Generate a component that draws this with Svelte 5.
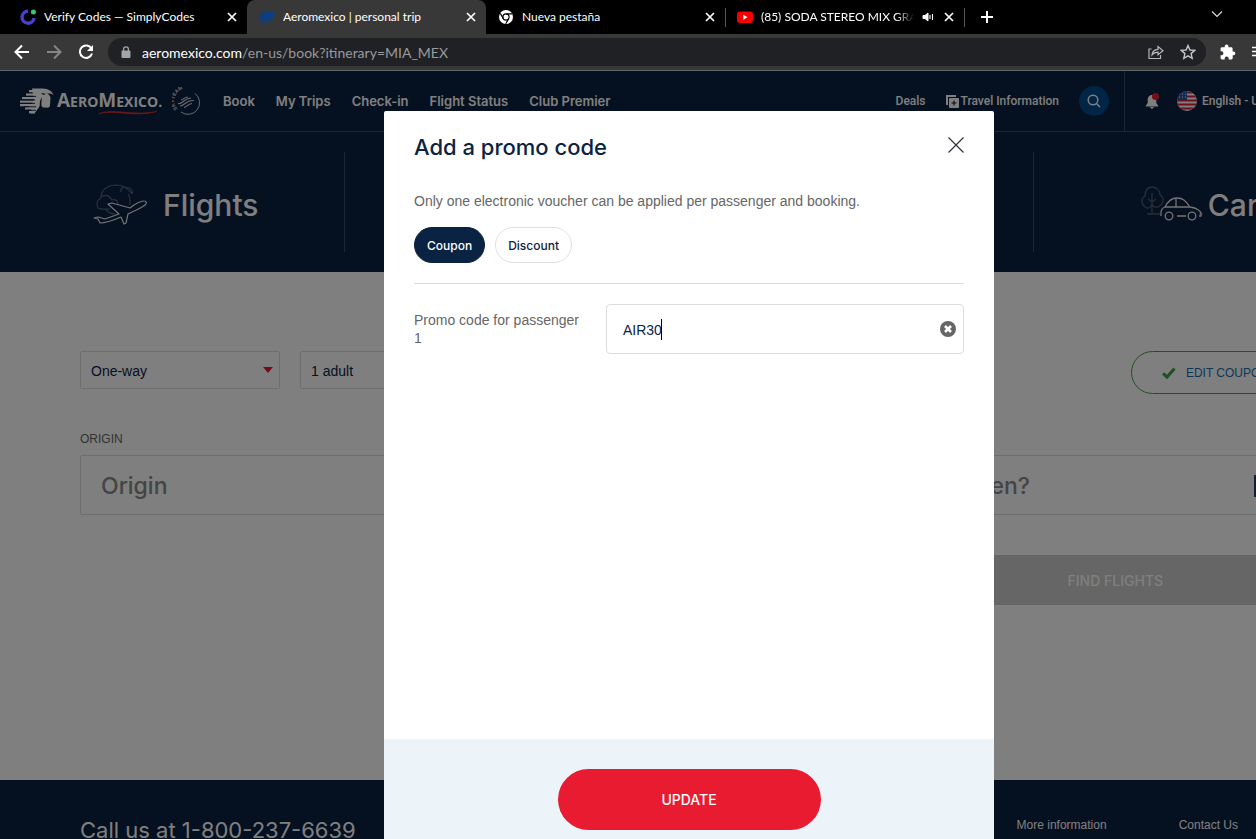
<script lang="ts">
  let promoCode = $state('AIR30');
  let voucherType = $state('Coupon');
  let dialogOpen = $state(true);

  const voucherTypes = ['Coupon', 'Discount'];
  const mainLinks = ['Book', 'My Trips', 'Check-in', 'Flight Status', 'Club Premier'];
</script>

{#snippet closeIcon()}
  <svg width="10" height="10" viewBox="0 0 10 10" fill="none" stroke="#fff" stroke-width="1.7">
    <path d="M1 1l8 8M9 1L1 9" />
  </svg>
{/snippet}

<div class="browser">
  <div class="tabs">
    <div class="tab">
      <svg class="favicon" viewBox="0 0 16 16">
        <path d="M8 2.2A6 6 0 1 0 14 9" fill="none" stroke="#4a3fd0" stroke-width="3.4" />
        <circle cx="13.4" cy="3" r="2.5" fill="#3fc46b" />
      </svg>
      <span class="tab-title">Verify Codes — SimplyCodes</span>
      <button class="tab-close" aria-label="Close tab">{@render closeIcon()}</button>
    </div>
    <div class="tab active">
      <svg class="favicon" viewBox="0 0 16 16" fill="#0d3f80">
        <path d="M1 7c1-3 4-5 8-5 4 0 6 1 7 4l-2 0c1 2 0 5-3 5l-2 2-4 1-2-2-3-1 1-1-2-1 1-1z" />
        <path d="M2 6.5h5M1 9h6" stroke="#25384f" stroke-width=".7" />
      </svg>
      <span class="tab-title">Aeromexico | personal trip</span>
      <button class="tab-close" aria-label="Close tab">{@render closeIcon()}</button>
    </div>
    <div class="tab">
      <svg class="favicon" viewBox="0 0 16 16">
        <circle cx="8" cy="8" r="7" fill="#fff" />
        <circle cx="8" cy="8" r="3.1" fill="#fff" stroke="#000" stroke-width="1.2" />
        <path d="M8 4.9h6.2M5.3 9.6L2.3 4.4M10.7 9.6l-3 5.2" stroke="#000" stroke-width="1.2" />
      </svg>
      <span class="tab-title">Nueva pestaña</span>
      <button class="tab-close" aria-label="Close tab">{@render closeIcon()}</button>
    </div>
    <div class="tab divided">
      <svg class="favicon" viewBox="0 0 16 16">
        <rect y="2.5" width="16" height="11.5" rx="3" fill="#f60000" />
        <path d="M6.3 5.7v5l4.3-2.5z" fill="#fff" />
      </svg>
      <span class="tab-title fade">(85) SODA STEREO MIX GRANDES EXITOS</span>
      <svg width="12" height="12" viewBox="0 0 12 12" fill="none" stroke="#fff">
        <path d="M1 4.5h2l3-2.5v8l-3-2.5H1z" fill="#fff" />
        <path d="M8 4v4M10.5 3v6" stroke-width="1.1" />
      </svg>
      <button class="tab-close" aria-label="Close tab">{@render closeIcon()}</button>
    </div>
    <button class="new-tab" aria-label="New tab">
      <svg width="12" height="12" viewBox="0 0 12 12" stroke="#fff" stroke-width="2"><path d="M6 0v12M0 6h12" /></svg>
    </button>
    <button class="tab-search" aria-label="Search tabs">
      <svg width="12" height="8" viewBox="0 0 12 8" fill="none" stroke="#ddd" stroke-width="1.2"><path d="M1 1.5l5 5 5-5" /></svg>
    </button>
  </div>

  <div class="toolbar">
    <button class="tool" aria-label="Back">
      <svg width="16" height="16" viewBox="0 0 16 16" fill="none" stroke="#fff" stroke-width="2"><path d="M15 8H2M8 1.5L1.5 8 8 14.5" /></svg>
    </button>
    <button class="tool" aria-label="Forward">
      <svg width="16" height="16" viewBox="0 0 16 16" fill="none" stroke="#868686" stroke-width="2"><path d="M1 8h13M8 1.5L14.5 8 8 14.5" /></svg>
    </button>
    <button class="tool" aria-label="Reload">
      <svg width="16" height="16" viewBox="0 0 16 16" fill="none" stroke="#fff" stroke-width="2"><path d="M13.4 4.5A6.2 6.2 0 1 0 14 9.5" /><path d="M15 1v6H9z" fill="#fff" stroke="none" /></svg>
    </button>
    <div class="omnibox">
      <svg width="10" height="12" viewBox="0 0 10 12"><rect x=".5" y="4.5" width="9" height="7.5" rx="1" fill="#a2a4a8" /><path d="M2.6 5V3.3a2.4 2.4 0 0 1 4.8 0V5" fill="none" stroke="#a2a4a8" stroke-width="1.3" /></svg>
      <span class="url"><b>aeromexico.com</b>/en-us/book?itinerary=MIA_MEX</span>
      <svg width="16" height="16" viewBox="0 0 16 16" fill="none" stroke="#b6b6b8" stroke-width="1.2"><path d="M3.5 5H1v9.500h11.500V11M4 11c.3-3.600 2.400-5.400 6-5.600V2.500L15 6.700l-5 4.100V8.200C7.500 8.200 5.500 9 4 11z" /></svg>
      <svg width="16" height="16" viewBox="0 0 16 16" fill="none" stroke="#c4c4c6" stroke-width="1.4"><path d="M8 1.500l1.900 4.500 4.900.4-3.700 3.200 1.100 4.700L8 11.800l-4.200 2.500 1.100-4.700L1.200 6.400l4.900-.4z" /></svg>
    </div>
    <button class="tool" aria-label="Extensions">
      <svg width="16" height="16" viewBox="0 0 16 16" fill="#fff"><path d="M13.5 7.500h-.9V4.600c0-.8-.6-1.400-1.400-1.400H8.500v-.8a1.900 1.900 0 0 0-3.800 0v.8H2c-.8 0-1.400.6-1.400 1.400v2.700h.8a2 2 0 0 1 0 4H.6V14c0 .8.6 1.400 1.400 1.400h2.700v-.8a2 2 0 0 1 4 0v.8h2.600c.8 0 1.400-.6 1.400-1.400v-2.800h.8a1.850 1.850 0 0 0 0-3.700z" /></svg>
    </button>
    <button class="tool last" aria-label="Playlist">
      <svg width="16" height="16" viewBox="0 0 16 16" stroke="#fff" stroke-width="1.6"><path d="M0 3.500h11M0 7.500h11M0 11.500h7" /></svg>
    </button>
  </div>

  <div class="viewport">
    <div class="site">
      <header class="site-header">
        <a class="logo" href="#home" aria-label="Aeromexico">
          <svg width="34" height="28" viewBox="0 0 34 28" fill="#fff">
            <path d="M12 1.500h11c5 .2 8.500 2 10.500 6.500-2-1.300-4-1.600-6.500-1.500 2 1 3 2 3.500 4l-.5 8c-.5 2-2 2.500-3.500 2H23c-1.500-.5-2-3-1.500-6l.5-4.500-2 4c-.5 3 .5 5-1.500 7l-4 5.500h-4l1-5H8l6-8z" />
            <path d="M9 3h12v2.300H9zM6 6.500h12v2.300H6zM2 10h14v2.300H2zM0 13.500h16v2.300H0zM0 17h16v2.200H0zM5 20.300h12v2.200H5zM9 24h6v2.200H9z" />
            <path d="M3 9.400h13M1 12.900h14M0 16.400h15M4 19.800h12M7 23.300h9" stroke="#0a2040" stroke-width=".9" />
            <path d="M21 6l5 .8-2.500 1.200z" fill="#0a2040" />
          </svg>
          <span class="wordmark">
            <span><span class="cap">A</span>ERO<span class="cap">M</span>EXICO.</span>
            <svg class="swoosh" width="60" height="5" viewBox="0 0 60 5"><path d="M1 3.500C18-2 34 6 59 1.500 37 7.500 20 0 1 3.500z" fill="#e0352b" stroke="#e0352b" stroke-width=".5" /></svg>
          </span>
          <svg class="skyteam" width="28" height="28" viewBox="0 0 28 28" fill="none" stroke="#d6d9de">
            <defs><path id="skyteam-arc" d="M5.500 22A11 11 0 0 1 23 5.500" /></defs>
            <text font-size="5" font-weight="700" fill="#d6d9de" stroke="none"><textPath href="#skyteam-arc">SKYTEAM</textPath></text>
            <path d="M23 6.500A11.500 11.500 0 0 1 9 25" />
            <path d="M6 16.500c5 1 5-5 13-5.500M8 19c5 0 5-6 14-5.500M12 20.500c3 0 3-3.500 8-4M9 13c3-.5 3-3 7-3" stroke-width="1.1" />
          </svg>
        </a>
        <nav class="main-nav">
          {#each mainLinks as link}
            <a href="#book">{link}</a>
          {/each}
        </nav>
        <nav class="side-nav">
          <a href="#deals">Deals</a>
          <a class="travel" href="#travel">
            <svg width="13" height="13" viewBox="0 0 13 13"><path d="M1 10V1h9" fill="none" stroke="#fff" stroke-width="2" /><rect x="3" y="3" width="10" height="10" rx="1" fill="#fff" /><path d="M8 5.500v5M5.500 8h5" stroke="#0a2040" stroke-width="1.200" /></svg>
            Travel Information
          </a>
          <button class="search" aria-label="Search">
            <svg width="14" height="14" viewBox="0 0 14 14" fill="none" stroke="#fff" stroke-width="1.5"><circle cx="6" cy="6" r="4.8" /><path d="M9.500 9.500l3.500 3.500" /></svg>
          </button>
        </nav>
        <div class="account">
          <button class="bell" aria-label="Notifications">
            <svg width="16" height="18" viewBox="0 0 16 18"><path d="M7 3C4 3 2.700 5.500 2.700 8v3L1 13.500V14.500h12V13.500L11.300 11V8C11.300 5.500 10 3 7 3z" fill="#fff" /><path d="M5.200 15h3.600a1.800 1.800 0 0 1-3.600 0z" fill="#fff" /><circle cx="10.500" cy="4.500" r="3.500" fill="#f5182f" /></svg>
          </button>
          <a class="language" href="#language">
            <svg width="20" height="20" viewBox="0 0 20 20">
              <clipPath id="flag"><circle cx="10" cy="10" r="10" /></clipPath>
              <g clip-path="url(#flag)"><path fill="#fff" d="M0 0h20v20H0z" /><path d="M0 1.500h20M0 5.500h20M0 9.500h20M0 13.500h20M0 17.500h20" stroke="#d8203a" stroke-width="2" /><path fill="#2358a5" d="M0 0h10v9H0z" /><path d="M2 3h8M2 6h8" stroke="#fff" stroke-dasharray="1 2" /></g>
            </svg>
            English - US
          </a>
        </div>
      </header>

      <nav class="products">
        <a href="#flights">
          <svg width="54" height="42" viewBox="0 0 54 42" fill="none" stroke="#e8eaee" stroke-width="1.2" stroke-linejoin="round">
            <path d="M5 24c-2-4-1-8 3-10 0-8 6-12 14-13 8 0 14 4 17 9M8 13c6-4 9 0 11 3 3-1 6 0 6 4M5 24c3 2 7 1 12 1M28 8c-1-4 3-6 6-4 4-1 6 3 5 6M35 10c3 4 2 8 2 11M13 26c3 3 5 4 9 4" stroke="#566477" />
            <path d="M1 34l4-1 7 2 14-5-11-10 4-1 18 5c5-4 10-7 14-7 3 0 3 2 1 4-5 4-11 6-17 9l-2 9-2 1-3-7c-7 3-14 6-21 6l-2-4z" />
          </svg>
          Flights
        </a>
        <span></span>
        <span></span>
        <a href="#cars" class="cars">
          <svg width="62" height="38" viewBox="0 0 62 38" fill="none" stroke="#e8eaee" stroke-width="1.3" stroke-linejoin="round">
            <path d="M4 21c-4-3-4-9 0-11C4 4 7 1 11 1s8 3 8 8c4 2 4 7 1 10-4 4-8 2-9-1-1 4-4 5-7 3zM11 7v21M7 13l4 3 4-3M6 28h13M58 28h4" stroke="#4d5a6c" />
            <path d="M20 30v-3c0-3 1-5 4-6 3-6 6-9 12-9s9 3 13 9c7 1 11 4 11 7v2h-2M24 21h25M35 12v9M36 30h9" />
            <circle cx="28" cy="30" r="3.8" /><circle cx="51" cy="30" r="3.8" />
          </svg>
          Cars
        </a>
      </nav>

      <main class="booking">
        <div class="options">
          <div class="select">
            <select aria-label="Trip type"><option>One-way</option><option>Round trip</option></select>
            <svg width="10" height="6" viewBox="0 0 10 6"><path d="M0 0h10L5 6z" fill="#e81b30" /></svg>
          </div>
          <div class="select">
            <select aria-label="Passengers"><option>1 adult</option><option>2 adults</option></select>
            <svg width="10" height="6" viewBox="0 0 10 6"><path d="M0 0h10L5 6z" fill="#e81b30" /></svg>
          </div>
          <button class="edit-coupon">
            <svg width="14" height="12" viewBox="0 0 14 12" fill="none" stroke="#43a047" stroke-width="3.2"><path d="M1 6.300l4 3.700 7.500-8.500" /></svg>
            EDIT COUPON
          </button>
        </div>
        <div class="fields">
          <div class="field">
            <label for="origin">ORIGIN</label>
            <input id="origin" placeholder="Origin" />
          </div>
          <div class="field when">
            <label for="dates" aria-label="Dates"></label>
            <input id="dates" placeholder="When?" />
            <svg width="24" height="24" viewBox="0 0 24 24" fill="none" stroke="#284060" stroke-width="2"><path d="M1 3h22v20H1zM1 9h22M7 0v5M17 0v5" /></svg>
          </div>
          <button class="find">FIND FLIGHTS</button>
        </div>
      </main>

      <footer class="site-footer">
        <a class="phone" href="tel:18002376639">Call us at 1-800-237-6639</a>
        <nav>
          <a href="#more">More information</a>
          <a href="#contact">Contact Us</a>
        </nav>
      </footer>

      {#if dialogOpen}
        <div class="overlay">
          <div class="dialog" role="dialog" aria-modal="true" aria-labelledby="promo-title">
            <div class="dialog-body">
              <div class="dialog-head">
                <h2 id="promo-title">Add a promo code</h2>
                <button aria-label="Close" onclick={() => (dialogOpen = false)}>
                  <svg width="16" height="16" viewBox="0 0 16 16" stroke="#2c3038" stroke-width="1.2"><path d="M.5.5l15 15M15.500.5l-15 15" /></svg>
                </button>
              </div>
              <p>Only one electronic voucher can be applied per passenger and booking.</p>
              <div class="chips">
                {#each voucherTypes as type}
                  <button class="chip" class:selected={voucherType === type} onclick={() => (voucherType = type)}>{type}</button>
                {/each}
              </div>
              <div class="promo">
                <label for="promo-code">Promo code for passenger 1</label>
                <div class="promo-input">
                  <input id="promo-code" bind:value={promoCode} />
                  <span class="caret"></span>
                  <button aria-label="Clear code" onclick={() => (promoCode = '')}>
                    <svg width="16" height="16" viewBox="0 0 16 16"><circle cx="8" cy="8" r="8" fill="#666" /><path d="M5 5l6 6M11 5l-6 6" stroke="#fff" stroke-width="2.6" /></svg>
                  </button>
                </div>
              </div>
            </div>
            <div class="dialog-actions">
              <button class="update">UPDATE</button>
            </div>
          </div>
        </div>
      {/if}
    </div>
  </div>
</div>

<style>
  :global(body) {
    margin: 0;
    overflow: hidden;
  }

  .browser {
    display: flex;
    flex-direction: column;
    height: 100vh;
    overflow: hidden;
    font-family: "Liberation Sans", Arial, sans-serif;
    color: #0b2343;
  }

  .browser *,
  .browser *::before {
    box-sizing: border-box;
  }

  button {
    padding: 0;
    border: 0;
    background: none;
    font: inherit;
    color: inherit;
    cursor: pointer;
  }

  a {
    color: inherit;
    text-decoration: none;
  }

  svg {
    display: block;
    flex: none;
  }

  /* browser window */
  .tabs {
    display: flex;
    flex: none;
    height: 34px;
    padding-left: 8px;
    background: #000;
    color: #fff;
    font-family: Lato, "Noto Sans", sans-serif;
    font-size: 12px;
  }

  .tab {
    display: flex;
    align-items: center;
    flex: 0 1 239px;
    min-width: 0;
    padding: 0 10px 0 12px;
    border-radius: 8px 8px 0 0;
  }

  .tab.active {
    background: #383838;
  }

  .divided {
    position: relative;
  }

  .divided::before,
  .new-tab::before {
    content: "";
    position: absolute;
    left: 0;
    top: 8px;
    width: 1px;
    height: 19px;
    background: #555;
  }

  .favicon {
    width: 16px;
    height: 16px;
  }

  .tab-title {
    flex: 1;
    overflow: hidden;
    margin: 0 8px;
    line-height: 18px;
    white-space: nowrap;
  }

  .fade {
    mask-image: linear-gradient(to right, #000 88%, transparent);
  }

  .tab-close {
    display: grid;
    place-items: center;
    width: 10px;
    height: 16px;
  }

  .tab svg + .tab-close {
    margin-left: 10px;
  }

  .new-tab {
    position: relative;
    display: grid;
    place-items: center;
    width: 46px;
  }

  .tab-search {
    align-self: flex-start;
    margin: 10px 33px 0 auto;
  }

  .toolbar {
    display: flex;
    align-items: center;
    flex: none;
    height: 37px;
    padding-left: 6px;
    border-bottom: 1px solid #59676c;
    background: #383838;
  }

  .tool {
    display: grid;
    place-items: center;
    width: 32px;
    height: 28px;
  }

  .tool.last {
    justify-items: start;
    width: 4px;
    margin-left: 8px;
    overflow: hidden;
  }

  .omnibox {
    display: flex;
    align-items: center;
    flex: 1;
    gap: 16px;
    height: 28px;
    margin: 0 6px;
    padding: 0 10px 0 13px;
    border-radius: 14px;
    background: #202124;
    color: #989a9e;
    font-family: Lato, "Noto Sans", sans-serif;
    font-size: 14px;
  }

  .url {
    flex: 1;
    margin-left: -5px;
  }

  .url b {
    color: #fff;
    font-weight: 400;
  }

  .viewport {
    position: relative;
    flex: 1;
    min-height: 0;
    overflow: hidden;
  }

  /* the site is wider than the window and runs off its right edge */
  .site {
    position: relative;
    display: flex;
    flex-direction: column;
    width: calc(100% + 122px);
    height: 100%;
    background: #fff;
  }

  .site-header {
    display: flex;
    align-items: stretch;
    flex: none;
    height: 61px;
    border-bottom: 1px solid #3a4f66;
    background: #0a2040;
    color: #fff;
  }

  .site-header a,
  .site-header nav {
    display: flex;
    align-items: center;
  }

  .side-nav,
  .account {
    font-family: Roboto, "Liberation Sans", sans-serif;
    font-size: 12px;
    font-weight: 500;
  }

  .products,
  h2,
  .chip,
  .find,
  .update {
    font-family: Inter, "Liberation Sans", sans-serif;
    font-weight: 500;
  }

  .logo {
    gap: 3px;
    width: 180px;
    margin: 0 23px 0 20px;
  }

  .wordmark {
    position: relative;
    font-family: "Open Sans", sans-serif;
    font-size: 14px;
    font-weight: 700;
    line-height: 20px;
  }

  .cap {
    font-size: 19px;
  }

  .swoosh {
    position: absolute;
    right: 4px;
    bottom: -3px;
  }

  .skyteam {
    margin-left: auto;
    font-family: "Liberation Sans", sans-serif;
  }

  .main-nav {
    gap: 21px;
    font-family: Inter, "Liberation Sans", sans-serif;
    font-size: 13px;
    font-weight: 600;
  }

  .side-nav {
    gap: 20px;
    margin-left: auto;
    padding-right: 15px;
  }

  .travel {
    gap: 2px;
  }

  .search {
    display: grid;
    place-items: center;
    width: 30px;
    height: 30px;
    border-radius: 50%;
    background: #004a8c;
  }

  .account {
    display: flex;
    align-items: center;
    gap: 16px;
    width: 254px;
    padding-left: 20px;
    border-left: 1px solid #3a4f66;
  }

  .language {
    gap: 5px;
  }

  .products {
    display: grid;
    grid-template-columns: repeat(4, 1fr);
    align-items: center;
    flex: none;
    height: 140px;
    background: #0a2040;
    color: #fff;
    font-size: 30px;
  }

  .products > * {
    display: flex;
    align-items: center;
    justify-content: center;
    gap: 16px;
    height: 100px;
    padding-top: 6px;
    padding-left: 8px;
    border-right: 1px solid #3a4f66;
  }

  .products span:nth-child(2) {
    border: 0;
  }

  .products .cars {
    gap: 5px;
    padding-left: 4px;
    border: 0;
  }

  .booking {
    flex: none;
    height: 508px;
    padding: 79px 80px 0;
  }

  .options {
    display: flex;
    align-items: flex-start;
    gap: 20px;
  }

  .select {
    position: relative;
    width: 200px;
  }

  .select select {
    width: 100%;
    height: 38px;
    padding: 2px 10px 0;
    border: 1px solid #dcdcdc;
    border-radius: 2px;
    appearance: none;
    background: #fff;
    color: #0b2343;
    font: 14px "Liberation Sans", Arial, sans-serif;
  }

  .select svg {
    position: absolute;
    top: 16px;
    right: 7px;
  }

  .edit-coupon {
    display: flex;
    align-items: center;
    gap: 10px;
    height: 43px;
    margin-left: auto;
    padding: 0 28px 0 30px;
    border: 1px solid #43a047;
    border-radius: 22px;
    color: #1a6fb0;
    font-size: 12px;
  }

  .fields {
    display: grid;
    grid-template-columns: 7fr 3fr;
    margin-top: 37px;
  }

  .field {
    display: flex;
    flex-direction: column;
    gap: 8px;
    min-width: 0;
    position: relative;
  }

  .field label {
    height: 16px;
    font-size: 12px;
    line-height: 16px;
    color: #666;
  }

  .field input {
    min-width: 0;
    height: 60px;
    padding: 2px 20px 0;
    border: 1px solid #dcdcdc;
    border-radius: 2px;
    font: 500 23px Inter, sans-serif;
  }

  .field input::placeholder {
    color: #888;
    opacity: 1;
  }

  .when svg {
    position: absolute;
    right: 20px;
    bottom: 18px;
  }

  .find {
    grid-column: 2;
    height: 50px;
    margin-top: 40px;
    background: #ccc;
    color: #fff;
    font-size: 14px;
  }

  .site-footer {
    display: flex;
    justify-content: space-between;
    align-items: flex-start;
    flex: none;
    height: 200px;
    padding: 35px 140px 0 80px;
    background: #0a2040;
    color: #fff;
  }

  .phone {
    font-family: Inter, "Liberation Sans", sans-serif;
    font-size: 22px;
    line-height: 30px;
  }

  .site-footer nav {
    display: flex;
    gap: 72px;
    padding-top: 2px;
    font-size: 12px;
    line-height: 16px;
  }

  /* promo code dialog */
  .overlay {
    position: absolute;
    inset: 0 0 -21px;
    display: flex;
    justify-content: center;
    padding-top: 40px;
    background: rgba(0, 0, 0, 0.5);
  }

  .dialog {
    display: flex;
    flex-direction: column;
    width: 610px;
    border-radius: 2px;
    overflow: hidden;
    background: #fff;
  }

  .dialog-body {
    flex: 1;
    padding: 20px 30px;
  }

  .dialog-head {
    display: flex;
    align-items: flex-start;
    justify-content: space-between;
  }

  .dialog-head button {
    padding-top: 6px;
  }

  h2 {
    margin: 0;
    font-size: 22px;
    line-height: 32px;
  }

  .dialog p {
    margin: 28px 0 16px;
    color: #666;
    font-size: 14px;
    line-height: 20px;
  }

  .chips {
    display: flex;
    gap: 10px;
    padding-bottom: 20px;
    border-bottom: 1px solid #ddd;
  }

  .chip {
    height: 36px;
    padding: 0 12px;
    border: 1px solid #e0e0e0;
    border-radius: 18px;
    font-size: 12px;
  }

  .chip.selected {
    border-color: #0b2343;
    background: #0b2343;
    color: #fff;
  }

  .promo {
    display: flex;
    justify-content: space-between;
    margin-top: 20px;
  }

  .promo label {
    width: 172px;
    padding-top: 7px;
    color: #666;
    font-size: 14px;
    line-height: 18px;
  }

  .promo-input {
    position: relative;
    width: 358px;
  }

  .promo-input input {
    width: 100%;
    height: 50px;
    padding: 2px 40px 0 16px;
    border: 1px solid #ddd;
    border-radius: 4px;
    color: #0b2343;
    font: 14px "Liberation Sans", Arial, sans-serif;
  }

  .promo-input button {
    position: absolute;
    top: 17px;
    right: 8px;
  }

  .caret {
    position: absolute;
    top: 15px;
    left: 55px;
    width: 1px;
    height: 21px;
    background: #000;
  }

  .dialog-actions {
    display: flex;
    justify-content: center;
    padding: 30px;
    background: #ecf3f9;
  }

  .update {
    width: 263px;
    height: 61px;
    border-radius: 31px;
    background: #e81b30;
    color: #fff;
    font-size: 14px;
  }
</style>
